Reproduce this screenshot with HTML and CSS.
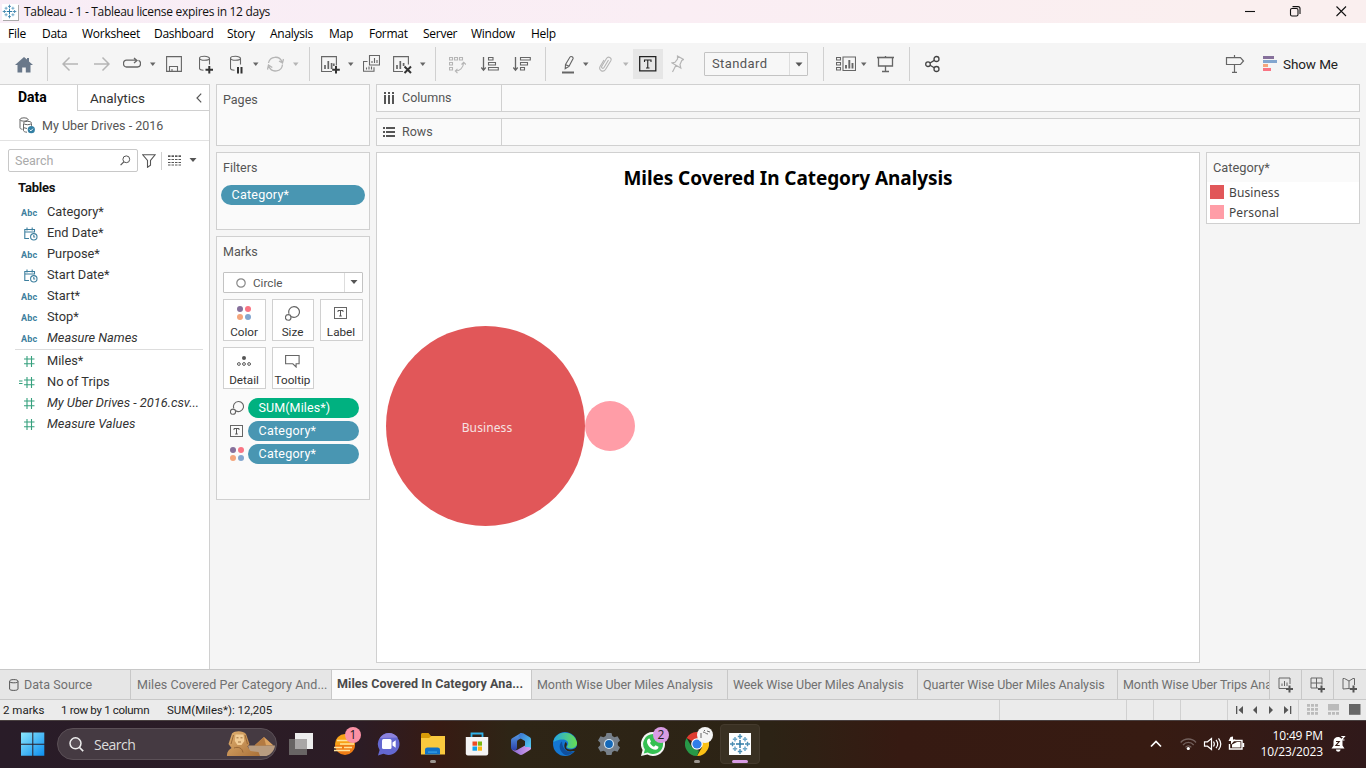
FILE: index.html
```html
<!DOCTYPE html>
<html lang="en">
<head>
<meta charset="utf-8">
<title>Tableau - 1</title>
<link rel="stylesheet" href="styles.css">
</head>
<body>
<svg class="defs" width="0" height="0" aria-hidden="true">
  <symbol id="caret" viewBox="0 0 6 20"><path d="M0 8.500h5.500l-2.750 3.500z" fill="currentColor"/></symbol>
  <symbol id="date" viewBox="0 0 14 14"><g fill="none" stroke="#3d7f9e" stroke-width="1.100"><path d="M5 11.500H.8V2.500h9.700v3M.8 5h9.700M3 .5v3M8.200.5v3"/><circle cx="9.800" cy="9.800" r="3.200"/><path d="M9.800 8v2h1.400"/></g></symbol>
  <symbol id="hash" viewBox="0 0 14 14"><path d="M5 2v11M9.500 2v11M2 5h10.500M2 9.800h10.500" fill="none" stroke="#35a07d" stroke-width="1.100"/></symbol>
  <symbol id="dots" viewBox="0 0 14 14"><circle cx="3" cy="3" r="3" fill="#86709b"/><circle cx="11" cy="3" r="3" fill="#f97483"/><circle cx="3" cy="11" r="3" fill="#f4a57c"/><circle cx="11" cy="11" r="3" fill="#83a6cf"/></symbol>
  <symbol id="size" viewBox="0 0 14 14"><g fill="none" stroke="#666" stroke-width="1.100"><path d="M3.800 7.300A5 5 0 1 1 5.700 9.700"/><circle cx="3" cy="10.700" r="2.600"/></g></symbol>
  <symbol id="label" viewBox="0 0 14 14"><rect x=".5" y="1.500" width="12" height="11" fill="none" stroke="#666"/><path d="M4 6V4.500h5V6M6.500 4.500v5.500M5.200 10h2.600" fill="none" stroke="#555"/></symbol>
  <symbol id="tableau" viewBox="0 0 22 22"><path fill="none" stroke="#2f7ba6" stroke-width="1.500" d="M11 7v8M7 11h8"/><path fill="none" stroke="#4a8db3" stroke-width="1.400" d="M11 1v5M8.800 3.500h4.400M11 16v5M8.800 18.500h4.400M1 11h5M3.500 8.800v4.400M16 11h5M18.500 8.800v4.400"/><path fill="none" stroke="#6fa8c9" stroke-width="1.500" d="M6 4v4.500M3.800 6.200h4.400M16 4v4.500M13.800 6.200h4.400M6 13.500V18M3.800 15.800h4.400M16 13.500V18M13.800 15.800h4.400"/></symbol>
</svg>

<header class="titlebar">
  <span class="applogo"><svg width="15" height="15"><use href="#tableau"/></svg></span>
  <span class="apptitle">Tableau - 1 - Tableau license expires in 12 days</span>
  <svg class="winbtns" width="102" height="22" viewBox="0 0 102 22"><g fill="none" stroke="#111" stroke-width="1.100"><path d="M0 10.500h10"/><rect x="45.500" y="7.500" width="7.500" height="7.500" rx="1.500"/><path d="M47.500 5.600h5.500a2 2 0 0 1 2 2v5.500"/><path d="M91.500 5.500l9.500 9.500M101 5.500L91.500 15"/></g></svg>
</header>

<nav class="menubar">
  <span class="mi-file">File</span><span class="mi-data">Data</span><span class="mi-work">Worksheet</span><span class="mi-dash">Dashboard</span><span class="mi-story">Story</span><span class="mi-an">Analysis</span><span class="mi-map">Map</span><span class="mi-fmt">Format</span><span class="mi-srv">Server</span><span class="mi-win">Window</span><span>Help</span>
</nav>

<div class="toolbar">
  <svg class="g15" width="18" height="20" viewBox="0 0 18 20"><path d="M9 3L0 11h2.500v7.500h4.700v-5h3.600v5h4.700V11H18L14 7.400V4h-2v1.600z" fill="#69788a"/></svg>
  <i class="sep g14"></i>
  <svg class="g14 dim" width="16" height="20" viewBox="0 0 16 20"><path d="M16 10H1M7.500 3.500L1 10l6.500 6.500" stroke-width="1.500"/></svg>
  <svg class="g16 dim" width="16" height="20" viewBox="0 0 16 20"><path d="M0 10h15M8.500 3.500L15 10l-6.500 6.500" stroke-width="1.500"/></svg>
  <svg class="g13 ink" width="18" height="20" viewBox="0 0 18 20"><path d="M10.500 13H3.500a3 3 0 0 1-3-3v-.8a3 3 0 0 1 3-3H13M11 4l3 2.500-3 2.500M13 13h1.500a3 3 0 0 0 3-3V9a3 3 0 0 0-2-2.600M10 13h4" stroke-width="1.300"/></svg>
  <svg class="g9 caret" width="6" height="20"><use href="#caret"/></svg>
  <svg class="g10 ink" width="16" height="20" viewBox="0 0 16 20"><path d="M.6 2.600h14.800v14.800H.6zM3.500 17v-4.500h8V17M6 17v-2"/></svg>
  <svg class="g17 ink" width="14" height="20" viewBox="0 0 14 20"><ellipse cx="5.500" cy="4.300" rx="5" ry="2"/><path d="M.5 4.500v9.800c0 1 1.500 1.800 4 2M10.500 4.500v6"/><path class="k" d="M10.300 12v7.500M6.500 15.800h7.500"/></svg>
  <svg class="g17 ink" width="13" height="20" viewBox="0 0 13 20"><ellipse cx="5.500" cy="4.300" rx="5" ry="2"/><path d="M.5 4.500v9.800c0 1 1.500 1.800 4 2M10.500 4.500v6"/><path class="k" d="M8 13v6.500M11.500 13v6.500"/></svg>
  <svg class="g10 caret" width="6" height="20"><use href="#caret"/></svg>
  <svg class="g8 dim" width="17" height="20" viewBox="0 0 17 20"><path d="M1.500 9a7 7 0 0 1 13.500-1M15.500 10.500a7 7 0 0 1-13.500 2M16.500 5l-1 4-3.500-2M.5 15.500l1-4.500 3.800 2.500" stroke-width="1.300"/></svg>
  <svg class="g9 caret off" width="6" height="20"><use href="#caret"/></svg>
  <i class="sep g10"></i>
  <svg class="g11 ink" width="19" height="20" viewBox="0 0 19 20"><path d="M11 17.500H.6V2.600h14.800v9"/><path d="M4 15v-4M7.300 15V7M10.600 15V9M12.800 12V9.500" stroke-width="1.700"/><path class="k" d="M15 12v7.500M11.200 15.800h7.600"/></svg>
  <svg class="g8 caret" width="6" height="20"><use href="#caret"/></svg>
  <svg class="g9 ink" width="17" height="20" viewBox="0 0 17 20"><path d="M6.500 1.500h10v9.500h-10zM4.500 7.500H.5v9.800h10.500v-4M9 9V7M11.500 9V4M14 9V6M3.500 15.500v-2M6 15.500v-3M8.500 15.500v-3"/></svg>
  <svg class="g13 ink" width="19" height="20" viewBox="0 0 19 20"><path d="M10 17.500H.6V2.600h14.800v8"/><path d="M4 15v-4M7.300 15V7M10.600 12V9" stroke-width="1.700"/><path class="k" d="M11.500 12.500l6.500 6.500M18 12.500L11.500 19"/></svg>
  <svg class="g8 caret" width="6" height="20"><use href="#caret"/></svg>
  <i class="sep g9"></i>
  <svg class="g13 dim" width="17" height="20" viewBox="0 0 17 20"><path d="M.5 3.500h3v2.500h-3zM5.500 3.500h3v2.500h-3zM10.500 3.500h3v2.500h-3zM.5 8.500h3V11h-3zM.5 13.500h3V16h-3zM6.500 17c4 0 8-3 8-8M12.500 10.500l2.200-2.200 2.200 2.200M8.500 14.800L6.300 17l2.200 2.200"/></svg>
  <svg class="g15 ink" width="18" height="20" viewBox="0 0 18 20"><path d="M2.500 3v13M.3 13.500l2.200 2.700 2.200-2.700" stroke-width="1.300"/><path d="M7.500 3.500h4.500v2.500H7.500zM7.500 8.500h7V11h-7zM7.500 13.500h9.800V16H7.500z"/></svg>
  <svg class="g14 ink" width="18" height="20" viewBox="0 0 18 20"><path d="M2.500 3v13M.3 13.500l2.200 2.700 2.200-2.700" stroke-width="1.300"/><path d="M7.500 3.500h9.800v2.500H7.500zM7.500 8.500h7V11h-7zM7.500 13.500h4V16h-4z"/></svg>
  <i class="sep g14"></i>
  <svg class="g16 ink" width="12" height="20" viewBox="0 0 12 20"><path d="M3.500 10.500L8 3c1-1.200 3.600.2 3 1.800L7 12.300l-3.800 2.500zM3.500 10.500L7 12.300" stroke-width="1.100"/><path d="M0 18.500h12" stroke-width="2"/></svg>
  <svg class="g9 caret" width="6" height="20"><use href="#caret"/></svg>
  <svg class="g10 dim" width="13" height="20" viewBox="0 0 13 20"><path d="M9.500 6L5 13.500c-1 1.600-3 .5-2.200-1.200L7.500 4.500c1.700-2.800 5.700-.6 4.300 2.200L6.500 15.500c-2.400 3.400-7.200.8-5.400-3L5 6" stroke-width="1.100"/></svg>
  <svg class="g11 caret off" width="6" height="20"><use href="#caret"/></svg>
  <span class="tbtn g4"><svg width="18" height="16" viewBox="0 0 18 16"><path d="M.7.700h16.100v14.100H.7z" stroke="#222" stroke-width="1.300" fill="none"/><path d="M5.500 6V4h6.500v2M8.750 4v8M7 12h3.500" stroke="#222" fill="none" stroke-width="1.100"/></svg></span>
  <svg class="g8 dim" width="13" height="20" viewBox="0 0 13 20"><path d="M6.500 2l6 3.500-1.700 1L9 10.500l.8 3.500L1 9l3-.7L6.500 5zM4.800 11.500L1.500 18" stroke-width="1.200"/></svg>
  <span class="combo g20"><b>Standard</b><em><svg width="8" height="20" viewBox="0 0 8 20"><path d="M.5 8.500h7L4 12.500z" fill="#555"/></svg></em></span>
  <i class="sep g15"></i>
  <svg class="g12 ink" width="20" height="20" viewBox="0 0 20 20"><path d="M.5 3.500h4V6h-4zM.5 8.500h4V11h-4zM.5 13.500h4V16h-4zM7 3h12.500v13.500H7z" stroke-width="1.100"/><path d="M10 14.500V11M13.300 14.500V6M16.500 14.500V9" stroke-width="1.900"/></svg>
  <svg class="g5 caret" width="6" height="20"><use href="#caret"/></svg>
  <svg class="g10 ink" width="18" height="20" viewBox="0 0 18 20"><path d="M0 3.500h17" stroke-width="1.600"/><path d="M1.500 3.500V12h14V3.500M8.500 2v1M8.500 12v5.500M5 17.500h7" stroke-width="1.300"/></svg>
  <i class="sep g14"></i>
  <svg class="g15 ink" width="15" height="20" viewBox="0 0 15 20"><g stroke="#444" stroke-width="1.300"><circle cx="3" cy="10.200" r="2.300"/><circle cx="11.500" cy="5" r="2.500"/><circle cx="11.500" cy="15" r="2.500"/><path d="M5 9l4.300-2.600M5 11.300l4.300 2.500"/></g></svg>
  <svg class="gauto ink" width="20" height="20" viewBox="0 0 20 20"><path d="M1.500 3.700h14L18.500 7l-3 3.500h-14zM9.500 1v2.700M9.500 10.500v8M7 18.300h5" stroke-width="1.200"/></svg>
  <svg class="g17" width="15" height="20" viewBox="0 0 15 20"><path fill="#86709b" d="M1 2h11v3H1z"/><path fill="#83a6cf" d="M1 6h14v3H1z"/><path fill="#f4a57c" d="M1 10h5v3H1z"/><path fill="#f97483" d="M1 14h8v3H1z"/></svg>
  <span class="showme">Show Me</span>
</div>

<main class="workspace">
  <aside class="side">
    <div class="sidetabs"><div class="tab-data">Data</div><div class="tab-an"><span>Analytics</span><svg width="6" height="10" viewBox="0 0 6 10"><path d="M5.200.7L1 5l4.200 4.300" fill="none" stroke="#555" stroke-width="1.200"/></svg></div></div>
    <div class="dsrow"><svg width="17" height="17" viewBox="0 0 17 17"><g fill="none" stroke="#666"><ellipse cx="5" cy="2.500" rx="4" ry="1.700"/><path d="M1 2.500v8.300c0 .8 1 1.300 2.500 1.500M9 2.500v.8M4.500 7v6.500c0 .9 1.300 1.600 3.500 1.700M12.500 6.800v2"/><ellipse cx="8.500" cy="6" rx="4" ry="1.700"/><path d="M4 10.500l4 1"/></g><circle cx="12.300" cy="12.700" r="3.600" fill="#3480a4"/><path d="M10.700 12.700l1.200 1.200 2-2.200" stroke="#fff" fill="none"/></svg><span>My Uber Drives - 2016</span></div>
    <div class="searchrow">
      <div class="search"><span>Search</span><svg width="11" height="11" viewBox="0 0 11 11"><circle cx="6.300" cy="4.300" r="3.400" fill="none" stroke="#555"/><path d="M3.800 6.800L.6 10.200" stroke="#555" stroke-width="1.200"/></svg></div>
      <svg class="g4" width="14" height="14" viewBox="0 0 14 14"><path d="M.7.800h12.400L8.500 6.500v4.800l-3 2V6.500z" fill="none" stroke="#555" stroke-width="1.100"/></svg>
      <i class="tinysep"></i>
      <svg class="g6" width="13" height="11" viewBox="0 0 13 11"><path d="M0 1.500h13M0 4.500h13M0 7.500h13M0 10h13M0 .2h13" stroke="#555" stroke-dasharray="2.500 1"/></svg>
      <svg class="g8" width="8" height="5" viewBox="0 0 8 5"><path d="M.5 0h7L4 4z" fill="#555"/></svg>
    </div>
    <h3>Tables</h3>
    <ul class="fields">
      <li><abbr>Abc</abbr><span>Category*</span></li>
      <li><svg class="fi" width="14" height="14"><use href="#date"/></svg><span>End Date*</span></li>
      <li><abbr>Abc</abbr><span>Purpose*</span></li>
      <li><svg class="fi" width="14" height="14"><use href="#date"/></svg><span>Start Date*</span></li>
      <li><abbr>Abc</abbr><span>Start*</span></li>
      <li><abbr>Abc</abbr><span>Stop*</span></li>
      <li><abbr>Abc</abbr><span class="it">Measure Names</span></li>
    </ul>
    <ul class="fields measures">
      <li><svg class="fh" width="14" height="14"><use href="#hash"/></svg><span>Miles*</span></li>
      <li><svg class="fh calc" width="18" height="14" viewBox="-4 0 18 14"><path d="M-3 6h3.500M-3 8.500h3.500" stroke="#35a07d"/><use href="#hash" width="14" height="14"/></svg><span>No of Trips</span></li>
      <li><svg class="fh" width="14" height="14"><use href="#hash"/></svg><span class="it">My Uber Drives - 2016.csv...</span></li>
      <li><svg class="fh" width="14" height="14"><use href="#hash"/></svg><span class="it">Measure Values</span></li>
    </ul>
  </aside>

  <section class="cards">
    <div class="card pages"><h4>Pages</h4></div>
    <div class="card filters"><h4>Filters</h4><div class="pill">Category*</div></div>
    <div class="card marks">
      <h4>Marks</h4>
      <div class="marktype"><svg width="10" height="10" viewBox="0 0 10 10"><circle cx="5" cy="5" r="4.200" fill="none" stroke="#888" stroke-width="1.200"/></svg><span>Circle</span><em><svg width="8" height="5" viewBox="0 0 8 5"><path d="M.5 0h7L4 4z" fill="#555"/></svg></em></div>
      <div class="btngrid">
        <div class="mbtn"><svg width="14" height="14"><use href="#dots"/></svg><span>Color</span></div>
        <div class="mbtn"><svg width="15" height="15" viewBox="0 0 14 14"><use href="#size"/></svg><span>Size</span></div>
        <div class="mbtn"><svg width="14" height="14"><use href="#label"/></svg><span>Label</span></div>
        <div class="mbtn"><svg width="14" height="14" viewBox="0 0 14 14"><circle cx="7" cy="4" r="2" fill="#555"/><g fill="none" stroke="#555"><circle cx="1.900" cy="10" r="1.400"/><circle cx="7" cy="10" r="1.400"/><circle cx="12.100" cy="10" r="1.400"/></g></svg><span>Detail</span></div>
        <div class="mbtn"><svg width="15" height="14" viewBox="0 0 15 14"><path d="M.6 1.500h13.500v8.300h-3V13L7.800 9.800H.6z" fill="none" stroke="#666" stroke-width="1.100"/></svg><span>Tooltip</span></div>
      </div>
      <div class="markrow"><svg width="14" height="14"><use href="#size"/></svg><div class="pill green">SUM(Miles*)</div></div>
      <div class="markrow"><svg width="14" height="14"><use href="#label"/></svg><div class="pill">Category*</div></div>
      <div class="markrow"><svg width="14" height="14"><use href="#dots"/></svg><div class="pill">Category*</div></div>
    </div>
  </section>

  <section class="canvas">
    <div class="shelf"><div class="shelfname"><svg width="12" height="12" viewBox="0 0 12 12"><path fill="#555" d="M1 0h2v2H1zM5 0h2v2H5zM9 0h2v2H9zM1 3h2v9H1zM5 3h2v9H5zM9 3h2v9H9z"/></svg><span>Columns</span></div></div>
    <div class="shelf"><div class="shelfname"><svg width="12" height="12" viewBox="0 0 12 12"><path fill="#555" d="M0 1h2v2H0zM0 5h2v2H0zM0 9h2v2H0zM3 1h9v2H3zM3 5h9v2H3zM3 9h9v2H3z"/></svg><span>Rows</span></div></div>
    <div class="viewrow">
      <div class="view">
        <h1>Miles Covered In Category Analysis</h1>
        <div class="bubbles"><div class="bubble big"><span>Business</span></div><div class="bubble small"></div></div>
      </div>
      <div class="legend"><h4>Category*</h4><p><i class="sw red"></i><span>Business</span></p><p><i class="sw pink"></i><span>Personal</span></p></div>
    </div>
  </section>
</main>

<div class="sheettabs">
  <div class="st s0"><svg width="10" height="12" viewBox="0 0 10 12"><path d="M.6 2.500v7.500c0 .8 1.500 1.400 4.200 1.400S9 10.800 9 10V2.500M.6 2.300C.6 1.200 2 .6 4.800.6S9 1.200 9 2.300 7.500 3.800 4.800 3.800.6 3.400.6 2.300z" fill="none" stroke="#555"/></svg><span>Data Source</span></div>
  <div class="st s1"><span>Miles Covered Per Category And...</span></div>
  <div class="st s2 on"><span>Miles Covered In Category Ana...</span></div>
  <div class="st s3"><span>Month Wise Uber Miles Analysis</span></div>
  <div class="st s4"><span>Week Wise Uber Miles Analysis</span></div>
  <div class="st s5"><span>Quarter Wise Uber Miles Analysis</span></div>
  <div class="st s6"><span>Month Wise Uber Trips Ana</span></div>
  <div class="st sb"><svg width="16" height="16" viewBox="0 0 16 16"><path d="M8 11.500H1V1h11v6M4 9V6.500M6.500 9V4M9 9V5.500" /><path class="k" d="M11.500 8.500v7M8 12h7"/></svg></div>
  <div class="st sb"><svg width="16" height="16" viewBox="0 0 16 16"><path d="M8 11H1V1h11v6.500M6.500 1v10M1 6h11"/><path class="k" d="M11.500 8.500v7M8 12h7"/></svg></div>
  <div class="st sb last"><svg width="16" height="16" viewBox="0 0 16 16"><path d="M8 12l-1-.5L1 12V1.500h1.500L7 4l4-2.500h1.500V8M7 4v8"/><path class="k" d="M11.500 8.500v7M8 12h7"/></svg></div>
</div>

<div class="status">
  <span class="x1">2 marks</span><span class="x2">1 row by 1 column</span><span class="x3">SUM(Miles*): 12,205</span>
  <i class="c1"></i><i class="c2"></i><i class="c3"></i><i class="c4"></i>
  <div class="nav"><svg width="56" height="8" viewBox="0 0 56 8"><path fill="#555" d="M0 0h1.300v8H0zM2.500 4L7 0v8zM17 4l4-4v8zM37 4l-4-4v8zM48 0l4.500 4L48 8zM54 0h1.300v8H54z"/></svg></div>
  <div class="modes"><svg width="54" height="12" viewBox="0 0 54 12"><path fill="#bbb" d="M0 1h3v2.800H0zM4 1h3v2.800H4zM8 1h3v2.800H8zM0 5h3v2.800H0zM4 5h3v2.800H4zM8 5h3v2.800H8zM0 9h3v2.800H0zM4 9h3v2.800H4zM8 9h3v2.800H8zM21 1h11v6.500H21zM21 9h3v2.800h-3zM25 9h3v2.800h-3zM29 9h3v2.800h-3z"/><path fill="#666" d="M42 1h11.500v10.800H42z"/></svg></div>
</div>

<footer class="taskbar">
  <svg class="start" width="24" height="24" viewBox="0 0 24 24"><defs><linearGradient id="wn" x1="0" y1="0" x2="1" y2="1"><stop offset="0" stop-color="#8be6fc"/><stop offset="1" stop-color="#0c8ef0"/></linearGradient></defs><path fill="url(#wn)" d="M0 .5h11.300v11.200H0zM12.300.5h11v11.200h-11zM0 12.700h11.300v11H0zM12.300 12.700h11v11h-11z"/></svg>
  <div class="tsearch">
    <svg width="15" height="15" viewBox="0 0 15 15"><circle cx="6.500" cy="6.300" r="5.500" fill="#5a5058" stroke="#eee" stroke-width="1.500"/><path d="M10.500 10.500l3.700 3.700" stroke="#eee" stroke-width="1.700"/></svg>
    <span>Search</span>
    <svg class="sphinx" width="49" height="26" viewBox="0 0 49 26"><defs><linearGradient id="sp" x1="0" y1="0" x2="1" y2="1"><stop offset="0" stop-color="#e0b070"/><stop offset="1" stop-color="#a97038"/></linearGradient></defs><path d="M22 14.500h27c-.5 5-4 9-8.500 10.500H24z" fill="#b89c80"/><path d="M38 6l9.500 8.500H28.500z" fill="#dba362"/><path d="M38 6l2 8.500H28.500z" fill="#b37a42"/><path d="M6 2.500C9-.5 17-.5 20 3l3.500 10-2 2.500 3 4.500 8 1 1.500 4H1c-.5-4 2-6.500 4.500-8L2.500 13z" fill="url(#sp)"/><path d="M9.500 3.500h8l.8 6.500-2.800 4h-4l-2.700-4z" fill="#f2cd96"/><path d="M7.500 4l-2.500 9M19 4l2.500 9M10.500 6.800h2M14.500 6.800h2M12 11h3M8 17c4-1.500 8-.5 9 4.500" stroke="#8a5a2c" fill="none" stroke-width=".8"/></svg>
  </div>
  <div class="apps">
    <div class="app"><svg width="24" height="24" viewBox="0 0 24 24"><path fill="#ededed" d="M6 1h18v16H6z"/><path fill="#686464" d="M0 7h18v16H0z"/><path fill="#a9a6a6" d="M6 7h12v10H6z"/></svg></div>
    <div class="app"><svg width="24" height="24" viewBox="0 0 24 24"><circle cx="12" cy="12" r="10" fill="#f8a117"/><path d="M2 13a10 10 0 0 0 20 0z" fill="#ef7d15"/><path d="M4 8.500h11M7 12h14M1 15.500h8M11 15.500h8M1 18.500h16" stroke="#ffe39a" stroke-width="1.600"/></svg><b class="badge pinkb">1</b></div>
    <div class="app"><svg width="24" height="24" viewBox="0 0 24 24"><path fill="#6468d0" d="M12 1a11 11 0 1 1-5.500 20.800L1 23.500l1.600-5.600A11 11 0 0 1 12 1z"/><path d="M3 6A11 11 0 0 1 21 5.500" fill="#8d83dc"/><rect x="5" y="7" width="9.500" height="10" rx="1.500" fill="#fff"/><path fill="#fff" d="M15.500 10.500l3.200-2.300v7.600l-3.200-2.300z"/></svg></div>
    <div class="app"><svg width="26" height="24" viewBox="0 0 26 24"><path fill="#d89b08" d="M1 2.500C1 1.600 1.600 1 2.500 1h6l2.500 3h13v7H1z"/><path fill="#fac93e" d="M1 6h8l2.500-2H25v18.500H1z"/><path fill="#1172c7" d="M5 22.500V18c0-1.700 1-2.500 2.500-2.500h10c1.500 0 2.500.8 2.500 2.500v4.500z"/><path fill="#39a4e8" d="M8 19.500h9v1.200H8z"/></svg><u></u></div>
    <div class="app"><svg width="24" height="24" viewBox="0 0 24 24"><path fill="none" stroke="#2fb1e8" stroke-width="1.800" d="M6.500 6V1.500h11V6"/><path fill="#f4f4f4" d="M.8 5h22.400v16.500a2 2 0 0 1-2 2H2.800a2 2 0 0 1-2-2z"/><path fill="#ee4b24" d="M7.500 9.500H12v4.200H7.500z"/><path fill="#7cb80d" d="M12.800 9.500H17v4.200h-4.200z"/><path fill="#13a1ea" d="M7.500 14.500H12v4.200H7.500z"/><path fill="#fbb60f" d="M12.800 14.500H17v4.200h-4.200z"/></svg></div>
    <div class="app"><svg width="24" height="24" viewBox="0 0 24 24"><defs><linearGradient id="oa" x1="0" y1="0" x2="0" y2="1"><stop offset="0" stop-color="#58a0e8"/><stop offset="1" stop-color="#2d3fa8"/></linearGradient><linearGradient id="ob" x1="0" y1="0" x2="1" y2="1"><stop offset="0" stop-color="#3a6fd0"/><stop offset="1" stop-color="#54d4f2"/></linearGradient><linearGradient id="oc"><stop offset="0" stop-color="#8466d0"/><stop offset="1" stop-color="#d8a0ee"/></linearGradient></defs><path fill="url(#oa)" d="M12 1L3.500 6C2.500 6.600 2 7.500 2 8.500v7c0 2 1.500 3 3 3 1.800 0 3-1.200 3-3V9.800c0-.8.400-1.300 1-1.700l5-3z"/><path fill="url(#ob)" d="M12 1c.8-.3 1.600 0 2.200.3L20.500 5c1 .6 1.500 1.500 1.500 2.500v8c0 1.200-.6 2-1.500 2.500L16 15.500V9L9.500 5.200C9.700 3 10.500 1.600 12 1z"/><path fill="url(#oc)" d="M2.200 16.500c1.500 2 4 2.500 6.300 1.200L16 13.500V15c4 0 6 .5 6 1 0 1-.5 1.700-1.500 2.300l-6.500 4c-1.300.8-2.700.8-4 0L4 18.800z"/></svg></div>
    <div class="app"><svg width="24" height="24" viewBox="0 0 24 24"><defs><linearGradient id="ed"><stop offset="0" stop-color="#23a6e6"/><stop offset="1" stop-color="#67df50"/></linearGradient></defs><circle cx="12" cy="12" r="12" fill="#1477d2"/><path fill="url(#ed)" d="M.3 10C2-2 21-3 24 10.500c.3 4-3 6-6.500 6-3 0-4.500-1.200-3-3 2-3-.5-6-5-6-4.500 0-8 2-9.200 2.500z"/><path fill="#0f4f9e" d="M9 9.500c-4 3-3 10 3 13.500 4 .5 7-1 9.500-4-6 2.500-12-.5-12.500-9.500z"/><path fill="#2e2517" d="M12.500 10c2 1.500 1.500 3 .8 4.200-1 2 1.200 3.300 4.200 3.300 2.500 0 5-.8 6.500-3.500v5h-4c-6 2-11-3-7.500-9z"/></svg></div>
    <div class="app"><svg width="24" height="24" viewBox="0 0 24 24"><path fill="#77808a" d="M9.500 1h5l.8 3 2.200 1.200 3-.9 2.500 4.200-2.200 2.200v2.600l2.200 2.200-2.500 4.200-3-.9-2.200 1.200-.8 3h-5l-.8-3-2.200-1.200-3 .9L1 15.500l2.200-2.200v-2.600L1 8.500l2.500-4.200 3 .9L8.700 4z"/><circle cx="12" cy="12" r="5" fill="#dcebf7"/><circle cx="12" cy="12" r="3.900" fill="#1468b8"/></svg></div>
    <div class="app"><svg width="24" height="24" viewBox="0 0 24 24"><path fill="#f5f5f5" d="M12 0a12 12 0 1 1-5.600 22.600L0 24l1.600-6A12 12 0 0 1 12 0z"/><path fill="#35c052" d="M12 2a10 10 0 1 1-5.200 18.500L2.800 21.600l1.100-4A10 10 0 0 1 12 2z"/><path fill="#fff" d="M8.500 6.500l1.500 3-1 1.500c1 2 2.300 3 4 3.800l1.500-1.500 3 1.500c0 2-1.500 2.900-3 2.900-4 0-8.300-4.200-8.500-8 0-1.600 1-3 2.500-3.200z"/></svg><b class="badge plum">2</b></div>
    <div class="app"><svg width="24" height="24" viewBox="0 0 24 24"><path fill="#dd3c30" d="M1.600 6A12 12 0 0 1 22.400 6H12v6z"/><path fill="#fbc116" d="M22.400 6A12 12 0 0 1 12 24l5.200-9L12 6z"/><path fill="#279847" d="M1.600 6L6.800 15l5.200 3 2 .5L12 24A12 12 0 0 1 1.600 6z"/><circle cx="12" cy="12" r="5.800" fill="#fff"/><circle cx="12" cy="12" r="4.600" fill="#2f7de9"/></svg><b class="badge white"><svg width="16" height="16" viewBox="0 0 16 16"><path d="M4 6v5M6 5c2 0 3 2 5 2M10 4l3 1M7 3l1 1" stroke="#666" fill="none"/></svg></b><u></u></div>
    <div class="app active"><span class="tl"><svg width="22" height="22"><use href="#tableau"/></svg></span><u></u></div>
  </div>
  <svg class="chev" width="12" height="8" viewBox="0 0 12 8"><path d="M1 6.500l5-5 5 5" fill="none" stroke="#fff" stroke-width="1.700"/></svg>
  <svg class="tray" width="66" height="16" viewBox="0 0 66 16"><g fill="none" stroke="#72605c" stroke-width="1.300"><path d="M.7 6.500c4-4.700 11.300-4.700 15.300 0M3 9c3-3.500 7.800-3.500 10.700 0M5.500 11.300c1.500-2 4.300-2 5.800 0"/></g><circle cx="8.300" cy="12.500" r="1.600" fill="#fff"/><g fill="none" stroke="#fff" stroke-width="1.200"><path d="M24.500 5.800h3L31.500 2.500v11L27.500 10.200h-3zM33.500 5.500c1 1.500 1 3.500 0 5M36 3.800c2 2.500 2 6 0 8.400M38.500 2.300c2.800 3.500 2.800 8 0 11.500"/><path d="M54 4.500h8v8.500H49.500V8M63.500 7v4" stroke-width="1.400"/></g><path fill="#fff" d="M52 11.500V8.500l5-2.500h3.500v5.500zM50.500 1L53 .5v3h2.500L51 8.500V5h-2.500z"/></svg>
  <div class="clock"><span>10:49 PM</span><span class="dt">10/23/2023</span></div>
  <svg class="bell" width="16" height="18" viewBox="0 0 16 18"><path fill="#fff" d="M.5 13.500l2-3V6.500C2.500 3.500 4.500 2 7 2c2 0 4.500 1.500 4.500 4.500v4l2 3zM5 14.500h4.500c0 3-4.500 3-4.500 0z"/><path d="M5 6.500h3.200l-3.200 4h3.700" stroke="#351b14" fill="none" stroke-width="1.200"/><path d="M10.300 1.500h3l-3 3.500h3.200" stroke="#fff" fill="none" stroke-width="1.200"/></svg>
</footer>
</body>
</html>
```
FILE: styles.css
```css
* { box-sizing: border-box; }
body { margin: 0; width: 1366px; height: 768px; overflow: hidden; display: flex; flex-direction: column; background: #f5f5f5; font-family: Roboto, "Liberation Sans", sans-serif; font-size: 13px; color: #333; }
svg { display: block; flex: none; }
.defs { position: absolute; }
h1, h3, h4, p, ul { margin: 0; padding: 0; font-weight: 400; list-style: none; }
span, b, h1, h3, h4, .pill { white-space: nowrap; }

.titlebar { height: 23px; flex: none; display: flex; align-items: center; background: linear-gradient(90deg, #f8edf6, #faeef4 50%, #faefef 90%); font-family: "Open Sans", "Noto Sans", sans-serif; font-size: 12px; color: #111; }
.applogo { width: 16px; height: 16px; margin-left: 2px; background: #fff; box-shadow: 1px 1px 0 #aaa; }
.apptitle { margin-left: 6px; letter-spacing: -.3px; }
.winbtns { margin-left: auto; margin-right: 19px; }

.menubar { height: 20px; flex: none; display: flex; align-items: center; padding: 1px 0 0 8px; background: #fff; font-family: "Open Sans", "Noto Sans", sans-serif; font-size: 12px; letter-spacing: -.27px; color: #000; }
.mi-file { width: 34px; } .mi-data { width: 40px; } .mi-work { width: 72px; } .mi-dash { width: 73px; } .mi-story { width: 43px; } .mi-an { width: 59px; } .mi-map { width: 40px; } .mi-fmt { width: 54px; } .mi-srv { width: 48px; } .mi-win { width: 60px; }

.toolbar { height: 41px; flex: none; display: flex; align-items: center; padding: 1px 29px 0 0; background: #f5f5f5; }
.g4 { margin-left: 4px; } .g5 { margin-left: 5px; } .g6 { margin-left: 6px; } .g8 { margin-left: 8px; } .g9 { margin-left: 9px; } .g10 { margin-left: 10px; } .g11 { margin-left: 11px; } .g12 { margin-left: 12px; } .g13 { margin-left: 13px; } .g14 { margin-left: 14px; } .g15 { margin-left: 15px; } .g16 { margin-left: 16px; } .g17 { margin-left: 17px; } .g20 { margin-left: 20px; } .gauto { margin-left: auto; }
.sep { width: 1px; height: 34px; flex: none; background: #d0d0d0; }
.ink { fill: none; stroke: #666; stroke-width: 1.1; }
.dim { fill: none; stroke: #b5b5b5; stroke-width: 1.1; }
.k { stroke: #333; stroke-width: 2; }
.caret { color: #666; }
.off { color: #b5b5b5; }
.tbtn { width: 30px; height: 30px; display: flex; align-items: center; justify-content: center; background: #e6e6e6; }
.combo { width: 104px; height: 24px; margin-bottom: 1px; display: flex; align-items: center; border: 1px solid #c3c3c3; border-radius: 1px; background: #f7f7f7; color: #555; }
.combo b { flex: 1; padding: 0 0 1px 7px; font-weight: 400; letter-spacing: .4px; }
.combo em { width: 18px; height: 100%; display: flex; align-items: center; justify-content: center; border-left: 1px solid #ddd; }
.showme { width: 54px; margin-left: 6px; padding-bottom: 1px; font-size: 13.5px; letter-spacing: -.1px; color: #222; }

.workspace { height: 585px; flex: none; display: flex; gap: 6px; }
.side { width: 210px; border-top: 1px solid #d4d4d4; border-right: 1px solid #d0d0d0; background: #fff; }
.sidetabs { height: 26px; display: flex; }
.tab-data { width: 77px; padding: 4px 0 0 18px; font-size: 14px; font-weight: 700; color: #000; }
.tab-an { flex: 1; display: flex; align-items: center; padding: 0 7px 0 12px; border-left: 1px solid #d0d0d0; border-bottom: 1px solid #d0d0d0; font-size: 13.5px; color: #333; }
.tab-an svg { margin-left: auto; }
.dsrow { height: 30px; display: flex; align-items: center; gap: 6px; padding: 0 0 1px 19px; border-bottom: 1px solid #e2e2e2; font-size: 12.5px; color: #555; }
.searchrow { display: flex; align-items: center; padding: 8px 0 0 8px; }
.search { width: 130px; height: 23px; display: flex; align-items: center; justify-content: space-between; padding: 0 6px; border: 1px solid #c8c8c8; border-radius: 2px; font-size: 12.5px; color: #aaa; }
.tinysep { width: 1px; height: 18px; margin-left: 5px; background: #d0d0d0; }
.side h3 { height: 29px; padding: 8px 0 0 18px; font-size: 13px; font-weight: 700; letter-spacing: -.2px; color: #111; }
.fields { font-size: 12.8px; }
.fields li { height: 21px; display: flex; align-items: center; }
.fields abbr { width: 26px; margin-left: 21px; font-size: 9px; font-weight: 700; letter-spacing: .2px; padding-top: 2px; color: #3d7f9e; }
.fi { margin: 3px 9px 0 24px; }
.fh { margin: 0 11px 0 22px; }
.calc { margin-left: 18px; }
.it { font-style: italic; }
.measures { margin: 1px 6px 0 15px; border-top: 1px solid #ddd; }
.measures li { margin-left: -15px; }

.cards { width: 154px; display: flex; flex-direction: column; gap: 6px; }
.card, .shelf, .legend { border: 1px solid #d0d0d0; background: #fafafa; }
.card h4 { height: 32px; padding: 7px 0 0 6px; font-size: 12.5px; color: #555; }
.pages { height: 62px; } .filters { height: 78px; } .marks { height: 264px; }
.pill { height: 20px; padding-left: 10.5px; line-height: 19px; border-radius: 10px; background: #4996b2; color: #fff; font-size: 12.5px; letter-spacing: .25px; }
.filters .pill { margin: 0 4px; }
.green { background: #00b180; letter-spacing: .1px; }
.marktype { height: 21px; margin: 3px 6px 0; display: flex; align-items: center; padding-left: 12px; border: 1px solid #c3c3c3; border-radius: 1px; background: #fff; font-size: 11.7px; color: #555; }
.marktype span { margin-left: 7px; flex: 1; }
.marktype em { width: 18px; height: 100%; display: flex; align-items: center; justify-content: center; border-left: 1px solid #ddd; }
.btngrid { margin: 6px 6px 9px; display: grid; grid-template-columns: 43px 42px 43px; gap: 6px; }
.mbtn { height: 42px; display: flex; flex-direction: column; align-items: center; justify-content: space-between; padding: 6px 1px 1px 0; border: 1px solid #d0d0d0; background: #fff; font-size: 11.7px; color: #333; }
.markrow { display: flex; align-items: center; gap: 4px; padding: 0 10px 0 13px; margin-bottom: 3px; }
.markrow .pill { width: 111px; }

.canvas { width: 984px; display: flex; flex-direction: column; gap: 6px; }
.shelf { height: 28px; flex: none; }
.shelfname { width: 125px; height: 100%; display: flex; align-items: center; gap: 7px; padding: 0 0 1px 6px; border-right: 1px solid #d0d0d0; font-size: 12.5px; color: #555; }
.viewrow { display: flex; gap: 6px; align-items: flex-start; }
.view { width: 824px; height: 511px; border: 1px solid #d0d0d0; background: #fff; }
.view h1 { height: 173px; padding-top: 11px; text-align: center; font: 700 19px/28px "Noto Sans", "Open Sans", sans-serif; letter-spacing: -.07px; color: #000; }
.bubbles { display: flex; align-items: center; padding-left: 9px; }
.bubble { border-radius: 50%; }
.big { width: 199px; height: 200px; display: flex; align-items: center; justify-content: center; background: #e15759; font: 12px "Noto Sans", "Open Sans", sans-serif; color: #f6e2e2; }
.big span { padding: 2px 0 0 3px; letter-spacing: .1px; }
.small { width: 50px; height: 50px; background: #ff9da7; }
.legend { width: 154px; height: 72px; background: #fff; }
.legend h4 { height: 29px; padding: 7px 0 0 6px; background: #fafafa; font-size: 12.8px; color: #555; }
.legend p { height: 20px; display: flex; align-items: center; gap: 5px; padding-left: 3px; font: 12px "Noto Sans", "Open Sans", sans-serif; letter-spacing: .1px; color: #444; }
.sw { width: 14px; height: 14px; }
.red { background: #e15759; } .pink { background: #ff9da7; }

.sheettabs { height: 31px; flex: none; display: flex; border-top: 1px solid #c8c8c8; border-bottom: 1px solid #c8c8c8; background: #e6e6e6; font-size: 12.5px; letter-spacing: -.08px; color: #707070; }
.st { display: flex; align-items: center; flex: none; overflow: hidden; border-right: 1px solid #c8c8c8; padding-left: 5px; }
.s0 { width: 131px; padding-left: 9px; gap: 5px; letter-spacing: .05px; } .s1 { width: 201px; padding-left: 6px; letter-spacing: .05px; } .s2 { width: 200px; } .s3 { width: 196px; } .s4 { width: 190px; } .s5 { width: 200px; } .s6 { width: 152px; }
.on { background: #fafafa; font-weight: 700; letter-spacing: .07px; color: #4a4a4a; padding-bottom: 3px; }
.sb { width: 32px; padding: 0; justify-content: center; fill: none; stroke: #666; }
.sb .k { stroke: #555; }
.last { border-right: 0; }

.status { height: 20px; flex: none; display: flex; align-items: center; background: #ebebeb; font-size: 11.5px; color: #222; }
.x1 { width: 58px; padding-left: 3px; } .x2 { width: 106px; padding-left: 3px; letter-spacing: -.3px; } .x3 { padding-left: 3px; }
.status i { height: 100%; border-left: 1px solid #d0d0d0; }
.c1 { width: 127px; margin-left: auto; } .c2, .c3 { width: 27px; } .c4 { width: 47px; }
.nav { width: 71px; height: 100%; padding: 6px 0 0 8px; border-left: 1px solid #d0d0d0; }
.modes { width: 68px; height: 100%; padding: 3px 0 0 8px; border-left: 1px solid #d0d0d0; }

.taskbar { height: 48px; flex: none; display: flex; align-items: center; box-shadow: inset 0 1px #494040; background: linear-gradient(90deg, #291c28 0, #2c1c25 360px, #371b13 440px, #2e2516 510px, #2c2315 770px, #361a12 900px, #371b12 1150px, #30191a 1366px); font-family: "Open Sans", "Noto Sans", sans-serif; }
.start { margin-left: 21px; }
.tsearch { width: 220px; height: 32px; margin-left: 12px; display: flex; align-items: center; padding-left: 11px; border: 1px solid #5b5057; border-radius: 16px; background: #453a42; overflow: hidden; color: #ddd; font-size: 14px; }
.tsearch span { margin-left: 10px; letter-spacing: -.5px; }
.sphinx { margin-left: auto; margin-right: 1px; }
.apps { display: flex; align-items: center; margin-left: 2px; }
.app { width: 44px; height: 48px; position: relative; display: flex; align-items: center; justify-content: center; }
.app u { position: absolute; left: 19px; bottom: 5px; width: 6px; height: 3px; border-radius: 2px; background: #9b958f; }
.badge { position: absolute; left: 22px; top: 7px; width: 16px; height: 16px; border-radius: 8px; font-size: 12px; font-weight: 400; line-height: 16px; text-align: center; color: #222; }
.pinkb { background: #fb91a5; } .plum { background: #d89ce4; } .white { background: #f4f4f4; }
.app.active { width: 40px; height: 40px; margin-left: 1px; border: 1px solid #443a2d; border-radius: 4px; background: #393022; }
.app.active u { left: 11px; bottom: 0; width: 16px; background: #d89ce4; }
.tl { width: 22px; height: 22px; background: #fff; }
.chev { margin-left: 390px; }
.tray { margin-left: 18px; }
.clock { width: 78px; margin-left: -1px; display: flex; flex-direction: column; align-items: flex-end; font-size: 12px; line-height: 16px; letter-spacing: -.15px; color: #fff; }
.dt { letter-spacing: -.12px; }
.bell { margin-left: 8px; }
```
